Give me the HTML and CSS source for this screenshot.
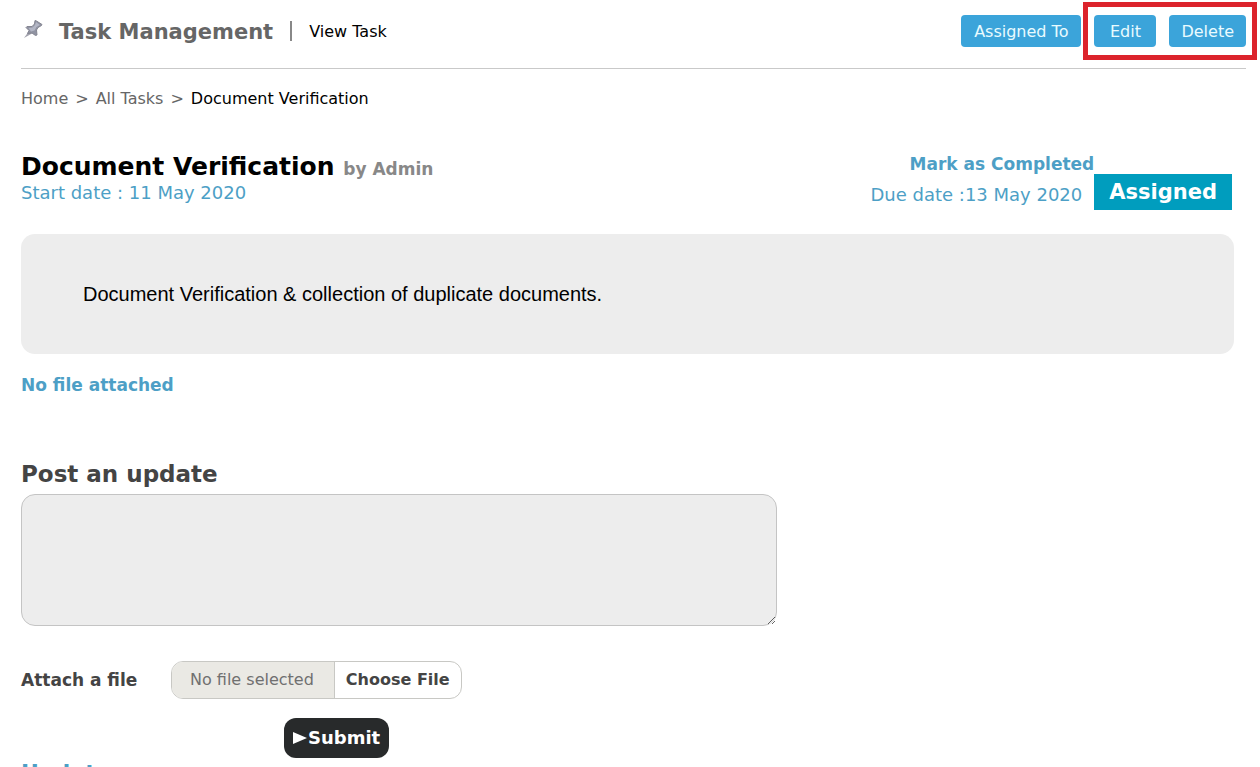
FILE: index.html
```html
<!DOCTYPE html>
<html lang="en">
<head>
<meta charset="utf-8">
<title>Task Management - View Task</title>
<link rel="stylesheet" href="styles.css">
</head>
<body>
<header class="topbar">
  <svg class="pin" viewBox="0 0 20 20" aria-hidden="true">
    <path d="M1 19 L6 12 L9 14.5 Z" fill="#a3a3ae"/>
    <path d="M12 1.5 L13.5 2 L19 5.5 L18.5 6.5 L15 8.5 L13.5 11 L14 16 L12.5 16.5 L9 14 L4.5 14.5 L6 11.5 L3 8.5 L4 7.5 L9 7.5 L11.5 5 Z" fill="#9093a2" stroke="#858692" stroke-width="1" stroke-linejoin="round"/>
    <path d="M13 3 L17 6 L13.5 8 L11.5 11.5 L8 12.5 L5.5 9 L9.5 8.5 L12 6 Z" fill="#b3b6c5"/>
  </svg>
  <h1 class="app-title">Task Management</h1>
  <span class="divider"></span>
  <span class="page-name">View Task</span>
  <div class="actions">
    <button class="btn" type="button">Assigned To</button>
    <div class="highlight">
      <button class="btn" type="button">Edit</button>
      <button class="btn" type="button">Delete</button>
    </div>
  </div>
</header>

<nav class="crumbs" aria-label="Breadcrumb">
  <a href="#">Home</a><span>&gt;</span><a href="#">All Tasks</a><span>&gt;</span><span class="current">Document Verification</span>
</nav>

<main class="task">
  <div class="summary">
    <div>
      <h2 class="task-title">Document Verification <small class="author">by Admin</small></h2>
      <p class="date">Start date : 11 May 2020</p>
    </div>
    <div class="state">
      <div class="due">
        <a class="complete" href="#">Mark as Completed</a>
        <p class="date due-date">Due date :13 May 2020</p>
      </div>
      <span class="status">Assigned</span>
    </div>
  </div>

  <p class="description">Document Verification &amp; collection of duplicate documents.</p>
  <p class="attachment">No file attached</p>

  <form class="update-form">
    <label class="update-label" for="update">Post an update</label>
    <textarea class="update-text" id="update"></textarea>
    <div class="file-row">
      <label class="file-label" for="file">Attach a file</label>
      <div class="uploader">
        <span class="file-name">No file selected</span>
        <span class="file-choose">Choose File</span>
        <input class="file-input" type="file" id="file">
      </div>
    </div>
    <button class="submit" type="submit"><svg class="play" viewBox="0 0 14 14" aria-hidden="true"><path d="M0 1 L14 7 L0 13 Z" fill="#fff"/></svg>Submit</button>
  </form>

  <h3 class="updates">Updates</h3>
</main>
</body>
</html>
```
FILE: styles.css
```css
* { box-sizing: border-box; }
html { overflow: hidden; }
body {
  margin: 0;
  padding: 0 14px 0 21px;
  background: #fff;
  color: #000;
  font: 16px/20px "DejaVu Sans", Verdana, sans-serif;
}
h1, h2, h3, p { margin: 0; }
a { color: inherit; text-decoration: none; }
button, textarea { font: inherit; }

.topbar {
  display: flex;
  align-items: center;
  height: 69px;
  padding-bottom: 6px;
  border-bottom: 1px solid #c9c9c9;
}
.pin { width: 20px; height: 20px; margin: 0 16px 4px 2px; }
.app-title { padding-top: 1px; color: #666; font-size: 21px; line-height: 28px; }
.divider { width: 2px; height: 20px; margin: 0 17px; background: #888; }
.page-name { padding-top: 2px; }
.actions { display: flex; gap: 13px; margin-left: auto; }
.highlight { position: relative; display: flex; gap: 13px; }
.highlight::after {
  content: "";
  position: absolute;
  inset: -13px -11px;
  border: 5px solid #dc232c;
  pointer-events: none;
}
.btn {
  height: 32px;
  padding: 2px 13px 0;
  border: 0;
  border-radius: 4px;
  background: #3ba4da;
  color: #e9fbff;
}
.highlight .btn { min-width: 62px; padding: 2px 12px 0; }

.crumbs { display: flex; gap: 7px; padding-top: 20px; color: #666; }
.current { color: #000; }

.task { padding-right: 12px; }
.summary { display: flex; justify-content: space-between; margin-top: 44px; }
.task-title { font-size: 25px; line-height: 28px; }
.author { color: #888; font-size: 17px; }
.date { color: #4d9fc6; font-size: 18px; line-height: 20px; }
.state { display: flex; align-items: flex-end; padding-right: 2px; }
.due { text-align: right; }
.complete { display: block; color: #4d9fc6; font-size: 17px; line-height: 22px; font-weight: bold; }
.due-date { padding: 10px 12px 5px 0; }
.status {
  padding: 0 15px;
  background: #009dbe;
  color: #fff;
  font-size: 21px;
  line-height: 36px;
  font-weight: bold;
}
.description {
  margin-top: 24px;
  padding: 48px 62px;
  border-radius: 14px;
  background: #ededed;
  font: 20px/24px "Liberation Sans", Arial, sans-serif;
}
.attachment { margin-top: 21px; color: #4d9fc6; font-size: 17px; font-weight: bold; }

.update-form { display: flex; flex-direction: column; align-items: flex-start; margin-top: 63px; color: #444; }
.update-label { font-size: 23px; line-height: 32px; font-weight: bold; }
.update-text {
  width: 756px;
  max-width: 100%;
  height: 132px;
  margin-top: 4px;
  border: 1px solid #c4c4c4;
  border-radius: 14px;
  background: #ededed;
}
.file-row { display: flex; align-items: center; margin-top: 35px; }
.file-label { width: 150px; font-size: 17px; font-weight: bold; }
.uploader {
  position: relative;
  display: flex;
  border: 1px solid #c8c8c4;
  border-radius: 12px;
  overflow: hidden;
  line-height: 36px;
}
.file-name { padding: 0 20px 0 18px; border-right: 1px solid #c8c8c4; background: #eae9e4; color: #707070; }
.file-choose { padding: 0 11px; font-weight: bold; }
.file-input { position: absolute; inset: 0; width: 100%; opacity: 0; }
.submit {
  display: flex;
  align-items: center;
  gap: 1px;
  height: 40px;
  margin: 19px 0 0 263px;
  padding: 0 9px;
  border: 0;
  border-radius: 12px;
  background: #282a2b;
  color: #fff;
  font-size: 18px;
  font-weight: bold;
}
.play { width: 14px; height: 14px; }
.updates { margin-top: 3px; color: #4d9fc6; font-size: 22px; line-height: 24px; }
```
